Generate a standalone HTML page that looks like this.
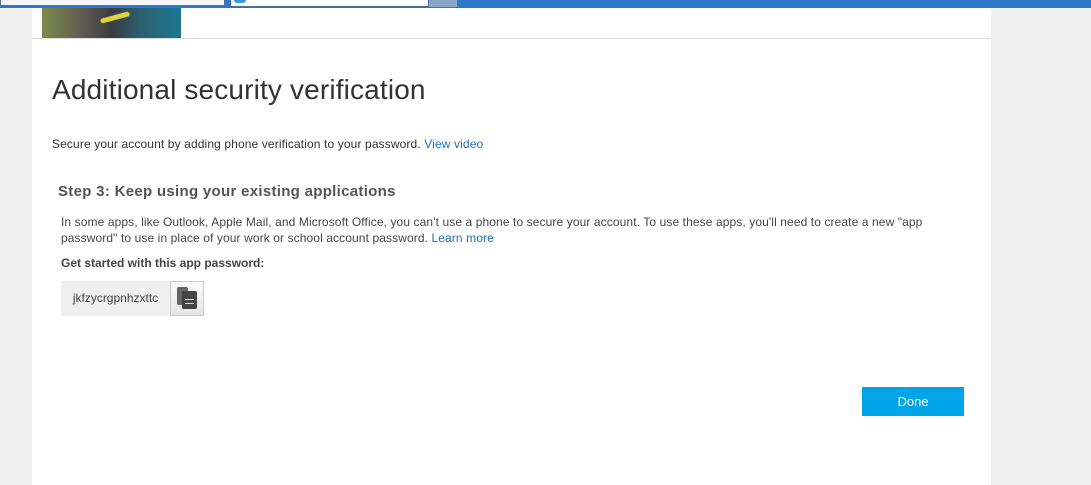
<!DOCTYPE html>
<html><head><style>
body{margin:0;width:1091px;height:485px;background:#efefef;font-family:"Liberation Sans",sans-serif;position:relative;overflow:hidden}
.a{position:absolute}
</style></head><body>
<div class="a" style="left:0;top:0;width:1091px;height:8px;background:#2b78c9"></div>
<div class="a" style="left:0;top:0;width:223px;height:5px;background:#f4f6f9;border:1px solid #5a6f90;border-top:0"></div>
<div class="a" style="left:230px;top:0;width:197px;height:6px;background:#fff;border:1px solid #3f6aa0;border-top:0"></div>
<div class="a" style="left:234px;top:0;width:12px;height:3px;background:#3a9ae0;border-radius:0 0 6px 6px"></div>
<div class="a" style="left:429px;top:0;width:28px;height:7px;background:#8aa7c9"></div>
<div class="a" style="left:32px;top:8px;width:959px;height:477px;background:#fff"></div>
<div class="a" style="left:42px;top:8px;width:139px;height:30px;background:linear-gradient(90deg,#7c8a4a 0%,#5e5a52 30%,#3b3b40 50%,#2d5f70 70%,#1a7790 100%)"></div>
<div class="a" style="left:100px;top:15px;width:30px;height:5px;background:#e2d23a;border-radius:3px;transform:rotate(-15deg)"></div>
<div class="a" style="left:32px;top:38px;width:959px;height:1px;background:#dcdcdc"></div>
<div class="a" style="left:52px;top:74px;font-size:28px;color:#333;letter-spacing:0.15px">Additional security verification</div>
<div class="a" style="left:52px;top:137px;font-size:12px;color:#333;letter-spacing:0.12px">Secure your account by adding phone verification to your password. <span style="color:#1f6fb8">View video</span></div>
<div class="a" style="left:58px;top:183px;font-size:15px;font-weight:bold;color:#555;letter-spacing:0.3px">Step 3: Keep using your existing applications</div>
<div class="a" style="left:61px;top:214px;width:900px;font-size:12px;line-height:16px;color:#444;letter-spacing:0.1px">In some apps, like Outlook, Apple Mail, and Microsoft Office, you can't use a phone to secure your account. To use these apps, you'll need to create a new "app password" to use in place of your work or school account password. <span style="color:#1f6fb8">Learn more</span></div>
<div class="a" style="left:61px;top:256px;font-size:12px;font-weight:bold;color:#444">Get started with this app password:</div>
<div class="a" style="left:61px;top:281px;width:109px;height:35px;background:#efefef;font-size:12px;color:#444;line-height:35px;text-align:center">jkfzycrgpnhzxttc</div>
<div class="a" style="left:170px;top:281px;width:32px;height:33px;border:1px solid #ccc;background:linear-gradient(#fafafa,#e6e6e6)"></div>
<div class="a" style="left:177px;top:287px;width:11px;height:18px;background:#666;border-radius:2px"></div>
<div class="a" style="left:182px;top:291px;width:15px;height:18px;background:#444;border-radius:2px"></div>
<div class="a" style="left:185px;top:299px;width:9px;height:1px;background:#ddd"></div>
<div class="a" style="left:185px;top:303px;width:9px;height:1px;background:#ddd"></div>
<div class="a" style="left:862px;top:387px;width:102px;height:29px;background:#00a4e8;color:#fff;font-size:13px;line-height:30px;text-align:center">Done</div>
</body></html>
